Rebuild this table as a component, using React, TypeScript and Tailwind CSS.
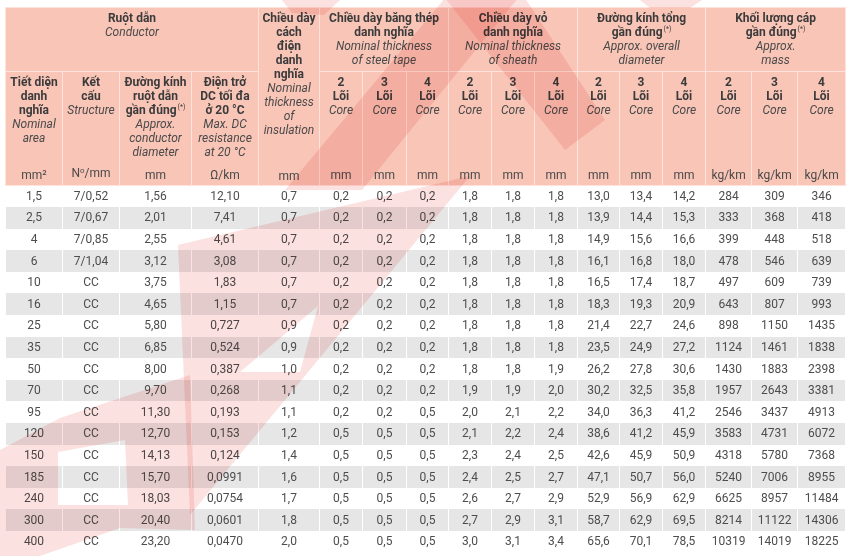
import React from "react";

const widths = [57, 57, 72, 67, 61, 43, 44, 42, 43, 43, 43, 42, 43, 43, 46, 46, 48];

const rows: string[][] = [
  ["1,5", "7/0,52", "1,56", "12,10", "0,7", "0,2", "0,2", "0,2", "1,8", "1,8", "1,8", "13,0", "13,4", "14,2", "284", "309", "346"],
  ["2,5", "7/0,67", "2,01", "7,41", "0,7", "0,2", "0,2", "0,2", "1,8", "1,8", "1,8", "13,9", "14,4", "15,3", "333", "368", "418"],
  ["4", "7/0,85", "2,55", "4,61", "0,7", "0,2", "0,2", "0,2", "1,8", "1,8", "1,8", "14,9", "15,6", "16,6", "399", "448", "518"],
  ["6", "7/1,04", "3,12", "3,08", "0,7", "0,2", "0,2", "0,2", "1,8", "1,8", "1,8", "16,1", "16,8", "18,0", "478", "546", "639"],
  ["10", "CC", "3,75", "1,83", "0,7", "0,2", "0,2", "0,2", "1,8", "1,8", "1,8", "16,5", "17,4", "18,7", "497", "609", "739"],
  ["16", "CC", "4,65", "1,15", "0,7", "0,2", "0,2", "0,2", "1,8", "1,8", "1,8", "18,3", "19,3", "20,9", "643", "807", "993"],
  ["25", "CC", "5,80", "0,727", "0,9", "0,2", "0,2", "0,2", "1,8", "1,8", "1,8", "21,4", "22,7", "24,6", "898", "1150", "1435"],
  ["35", "CC", "6,85", "0,524", "0,9", "0,2", "0,2", "0,2", "1,8", "1,8", "1,8", "23,5", "24,9", "27,2", "1124", "1461", "1838"],
  ["50", "CC", "8,00", "0,387", "1,0", "0,2", "0,2", "0,2", "1,8", "1,8", "1,9", "26,2", "27,8", "30,6", "1430", "1883", "2398"],
  ["70", "CC", "9,70", "0,268", "1,1", "0,2", "0,2", "0,2", "1,9", "1,9", "2,0", "30,2", "32,5", "35,8", "1957", "2643", "3381"],
  ["95", "CC", "11,30", "0,193", "1,1", "0,2", "0,2", "0,5", "2,0", "2,1", "2,2", "34,0", "36,3", "41,2", "2546", "3437", "4913"],
  ["120", "CC", "12,70", "0,153", "1,2", "0,5", "0,5", "0,5", "2,1", "2,2", "2,4", "38,6", "41,2", "45,9", "3583", "4731", "6072"],
  ["150", "CC", "14,13", "0,124", "1,4", "0,5", "0,5", "0,5", "2,3", "2,4", "2,5", "42,6", "45,9", "50,9", "4318", "5780", "7368"],
  ["185", "CC", "15,70", "0,0991", "1,6", "0,5", "0,5", "0,5", "2,4", "2,5", "2,7", "47,1", "50,7", "56,0", "5240", "7006", "8955"],
  ["240", "CC", "18,03", "0,0754", "1,7", "0,5", "0,5", "0,5", "2,6", "2,7", "2,9", "52,9", "56,9", "62,9", "6625", "8957", "11484"],
  ["300", "CC", "20,40", "0,0601", "1,8", "0,5", "0,5", "0,5", "2,7", "2,9", "3,1", "58,7", "62,9", "69,5", "8214", "11122", "14306"],
  ["400", "CC", "23,20", "0,0470", "2,0", "0,5", "0,5", "0,5", "3,0", "3,1", "3,4", "65,6", "70,1", "78,5", "10319", "14019", "18225"],
];

// "(*)" note mark after "gần đúng"
const Star = () => <span className="relative -top-[5px] ml-px text-[7px] font-normal leading-none">(*)</span>;

// one sub header cell: title on top, unit at the bottom
const Sub = ({ bold, italic, unit }: { bold: React.ReactNode[]; italic: string[]; unit: React.ReactNode }) => (
  <th className="border border-[#fde3db] p-0 align-top font-normal">
    <div className="flex h-[112px] flex-col justify-between pt-[3px] pb-[2px]">
      <div>
        {bold.map((b, i) => (
          <div key={i} className="font-bold text-[#3b3b3b]">{b}</div>
        ))}
        {italic.map((t, i) => (
          <div key={i} className="italic text-[#4a4a4a]">{t}</div>
        ))}
      </div>
      <div className="text-[#4a4a4a]">{unit}</div>
    </div>
  </th>
);

const Group = ({ span, bold, italic }: { span: number; bold: React.ReactNode[]; italic: string[] }) => (
  <th colSpan={span} className="border border-[#fde3db] px-0 pt-[3px] pb-0 align-top font-normal">
    {bold.map((b, i) => (
      <div key={i} className="font-bold text-[#3b3b3b]">{b}</div>
    ))}
    {italic.map((t, i) => (
      <div key={i} className="italic text-[#4a4a4a]">{t}</div>
    ))}
  </th>
);

// faint logo letters printed across the sheet
const Watermark = () => (
  <svg
    width="850"
    height="556"
    viewBox="0 0 850 556"
    className="pointer-events-none absolute left-0 top-0 mix-blend-multiply"
  >
    <g fill="#e8473f" fillOpacity="0.16" fillRule="evenodd">
      {/* D */}
      <polygon points="285,190 362,190 518,-2 445,-2" />
      <polygon points="445,-2 525,-2 605,120 565,150" />
      <polygon points="282,0 340,0 324,15 292,13" />
      <polygon points="640,0 702,0 690,8 650,8" />
      {/* A */}
      <path d="M178,245 L470,176 L190,515 Z M240,372 L318,306 L300,372 Z" />
      {/* C */}
      <path d="M190,375 L195,530 L120,528 L40,556 L0,556 L0,450 L60,418 Z M58,452 L125,440 L128,505 L58,505 Z" />
    </g>
  </svg>
);

export default function App() {
  return (
    <div className="relative h-[556px] w-[850px] overflow-hidden bg-white" style={{ fontFamily: "Roboto, 'Noto Sans', sans-serif" }}>
      <table className="ml-[5px] mt-[7px] w-[840px] table-fixed border-collapse text-center">
        <colgroup>
          {widths.map((w, i) => (
            <col key={i} style={{ width: w }} />
          ))}
        </colgroup>
        <thead className="bg-[#f8c5b7] text-[12px] leading-[14px]">
          <tr className="h-[64px]">
            <Group span={4} bold={["Ruột dẫn"]} italic={["Conductor"]} />
            <th rowSpan={2} className="border border-[#fde3db] p-0 align-top font-normal">
              <div className="flex h-[177px] flex-col justify-between pt-[3px] pb-[2px]">
                <div>
                  {["Chiều dày", "cách", "điện", "danh", "nghĩa"].map((t) => (
                    <div key={t} className="font-bold text-[#3b3b3b]">{t}</div>
                  ))}
                  {["Nominal", "thickness", "of", "insulation"].map((t) => (
                    <div key={t} className="italic text-[#4a4a4a]">{t}</div>
                  ))}
                </div>
                <div className="text-[#4a4a4a]">mm</div>
              </div>
            </th>
            <Group span={3} bold={["Chiều dày băng thép", "danh nghĩa"]} italic={["Nominal thickness", "of steel tape"]} />
            <Group span={3} bold={["Chiều dày vỏ", "danh nghĩa"]} italic={["Nominal thickness", "of sheath"]} />
            <Group span={3} bold={["Đường kính tổng", <>gần đúng<Star /></>]} italic={["Approx. overall", "diameter"]} />
            <Group span={3} bold={["Khối lượng cáp", <>gần đúng<Star /></>]} italic={["Approx.", "mass"]} />
          </tr>
          <tr>
            <Sub bold={["Tiết diện", "danh", "nghĩa"]} italic={["Nominal", "area"]} unit="mm²" />
            <Sub bold={["Kết", "cấu"]} italic={["Structure"]} unit={<>N<span className="relative -top-[4px] text-[8px]">o</span>/mm</>} />
            <Sub bold={["Đường kính", "ruột dẫn", <>gần đúng<Star /></>]} italic={["Approx.", "conductor", "diameter"]} unit="mm" />
            <Sub bold={["Điện trở", "DC tối đa", "ở 20 °C"]} italic={["Max. DC", "resistance", "at 20 °C"]} unit="Ω/km" />
            {[0, 1, 2].map((g) =>
              ["2", "3", "4"].map((n) => (
                <Sub key={g + n} bold={[n, "Lõi"]} italic={["Core"]} unit="mm" />
              ))
            )}
            {["2", "3", "4"].map((n) => (
              <Sub key={"k" + n} bold={[n, "Lõi"]} italic={["Core"]} unit="kg/km" />
            ))}
          </tr>
        </thead>
        <tbody className="text-[12px] text-[#4d4d4d]">
          {rows.map((r, i) => (
            <tr key={r[0]} className={i % 2 === 1 ? "h-[21.6px] bg-[#e6e6e6]" : "h-[21.6px] bg-white"}>
              {r.map((c, j) => (
                <td key={j} className="border-x border-white p-0 leading-[21px]">
                  {c}
                </td>
              ))}
            </tr>
          ))}
        </tbody>
      </table>
      <Watermark />
    </div>
  );
}
